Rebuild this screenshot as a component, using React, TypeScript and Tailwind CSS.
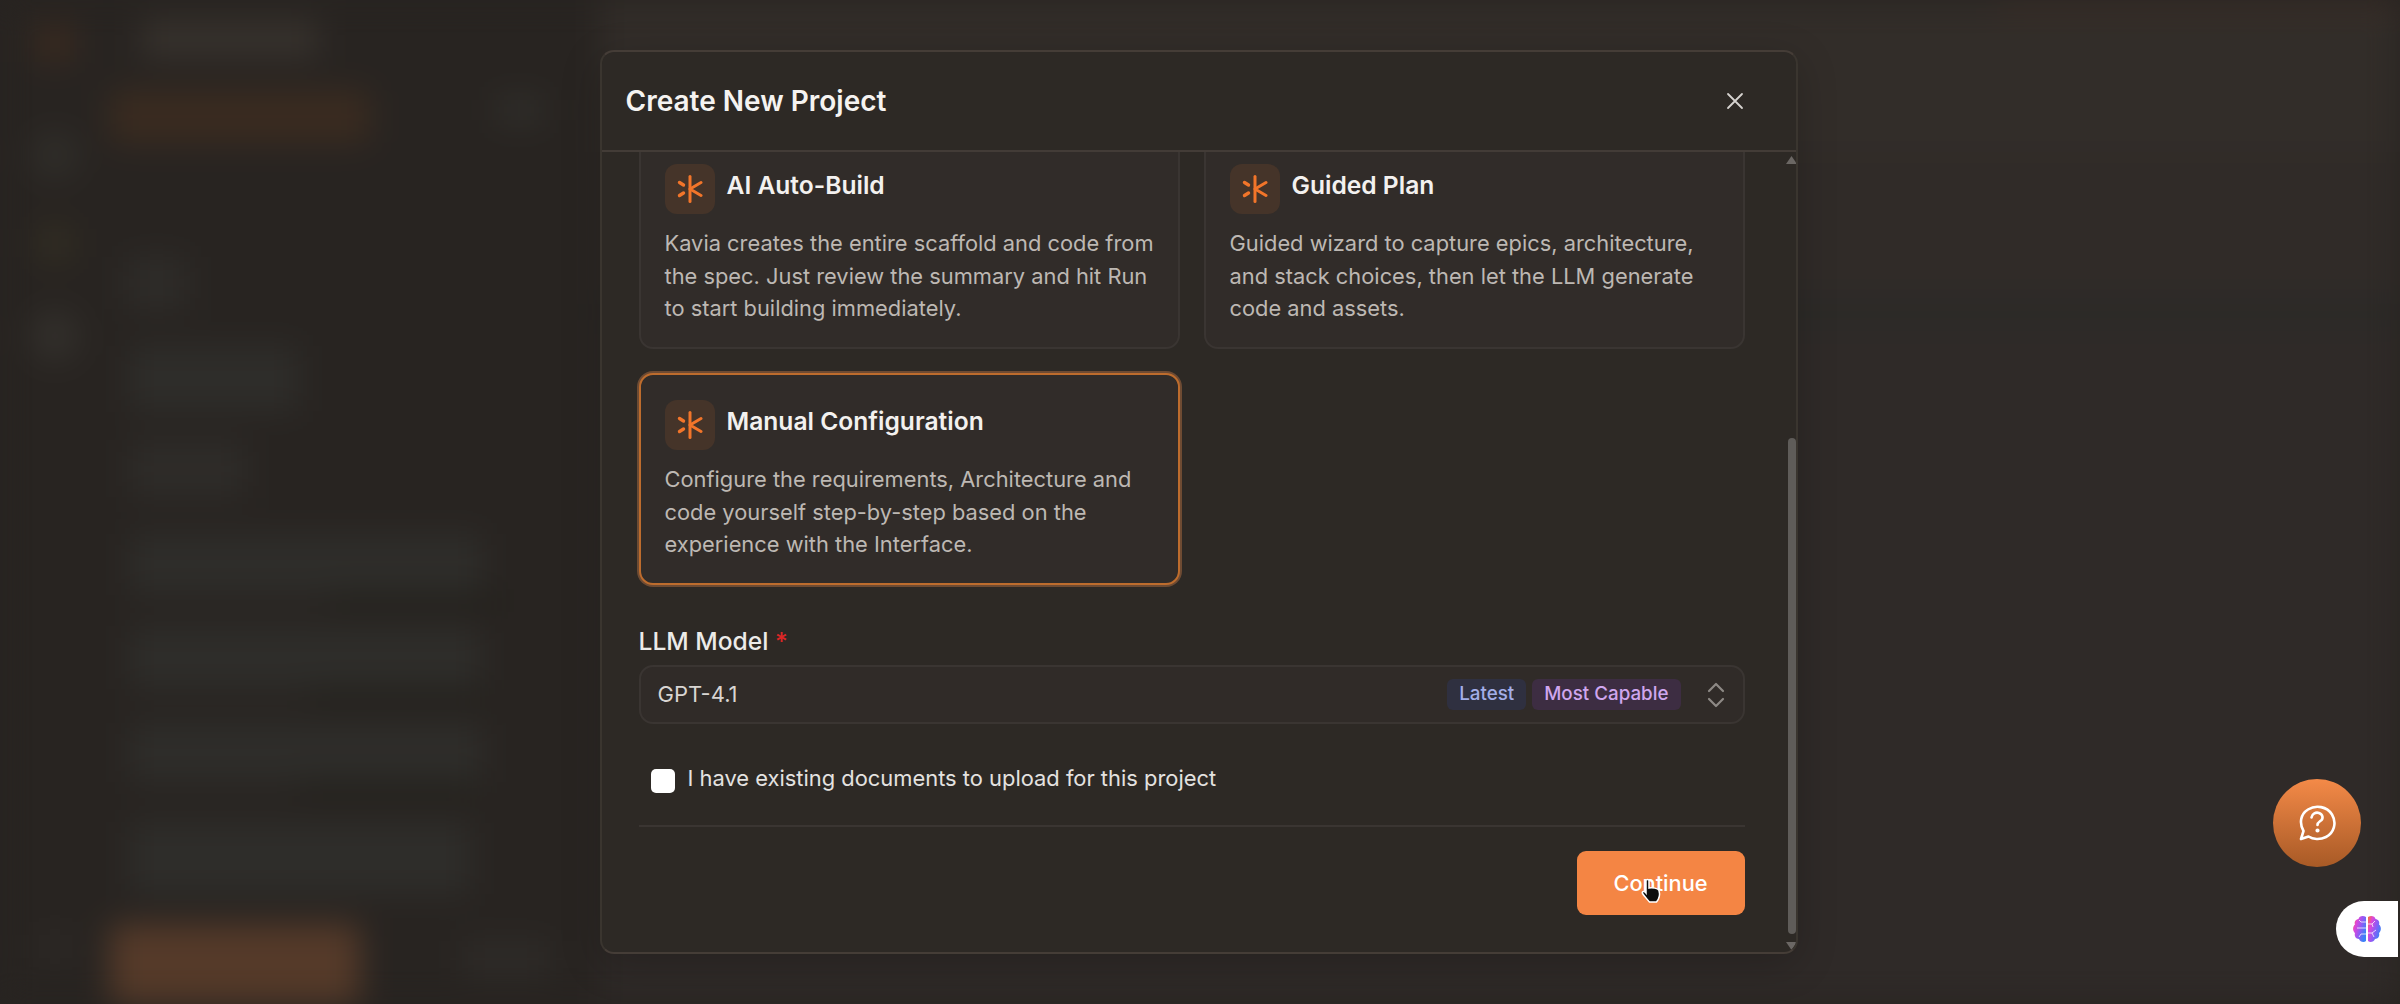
import React from "react";

const font = { fontFamily: "Inter, 'Liberation Sans', sans-serif" };

function KaviaMark() {
  return (
    <svg width="26" height="28" viewBox="0 0 26 28" fill="none" stroke="#f2752a" strokeLinecap="round">
      <path d="M13 1.500V26.500" strokeWidth="3" />
      <path d="M13 14L24 7.500M13 14L24 20.500" strokeWidth="3" />
      <path d="M2.500 7.500L6.500 10M2.500 20.500L6.500 18" strokeWidth="3.400" />
    </svg>
  );
}

function ModeCard({ title, text, selected }: { title: string; text: string[]; selected?: boolean }) {
  return (
    <div
      className={
        selected
          ? "h-[212px] rounded-[14px] border-2 border-[#bd6c2d] bg-[#312c29] px-[24px] pt-[25px] shadow-[0_0_0_2px_#6e4b33]"
          : "h-[212px] rounded-[14px] border-2 border-[#3a3532] bg-[#312c29] px-[24px] pt-[25px]"
      }
    >
      <div className="flex items-start gap-[12px]">
        <div className="flex h-[50px] w-[50px] items-center justify-center rounded-[12px] bg-[#453429]">
          <KaviaMark />
        </div>
        <div className="pt-[5px] text-[24.6px] font-semibold leading-[32px] text-[#f3f1ef]">{title}</div>
      </div>
      <div className="mt-[13px] text-[21.85px] leading-[32.5px] text-[#bdb8b3]">
        {text.map((l) => (
          <div key={l} className="whitespace-nowrap">{l}</div>
        ))}
      </div>
    </div>
  );
}

function BackdropPage() {
  return (
    <div className="flex h-[1004px] w-[2400px] bg-[#282421] blur-[16px]">
      <div className="flex w-[110px] shrink-0 flex-col items-center pt-[24px]">
        <div className="h-[38px] w-[38px] bg-[#3a2a20]" />
        <div className="mt-[70px] h-[46px] w-[46px] rounded-full bg-[#302e2a]" />
        <div className="mt-[50px] h-[30px] w-[30px] bg-[#353022]" />
        <div className="mt-[53px] h-[50px] w-[46px] rounded-full bg-[#33302c]" />
        <div className="mt-auto mb-[44px] h-[27px] w-[34px] bg-[#2d2926]" />
      </div>
      <div className="flex w-[490px] shrink-0 flex-col">
        <div className="ml-[32px] mt-[20px] h-[37px] w-[176px] bg-[#37322d]" />
        <div className="mt-[33px] flex items-start">
          <div className="h-[53px] w-[260px] rounded-lg bg-[#3a2b20]" />
          <div className="ml-[126px] mt-[7px] h-[26px] w-[46px] bg-[#302f2b]" />
        </div>
        <div className="ml-[16px] mt-[114px] h-[53px] w-[61px] bg-[#2e2c29]" />
        <div className="ml-[20px] mt-[37px] h-[66px] w-[168px] bg-[#2e2d2a]" />
        <div className="ml-[20px] mt-[30px] h-[57px] w-[115px] bg-[#2e2c29]" />
        <div className="ml-[20px] mt-[37px] h-[60px] w-[352px] bg-[#2e2d2a]" />
        <div className="ml-[220px] h-[13px] w-[172px] bg-[#211f1a]" />
        <div className="ml-[20px] mt-[20px] h-[63px] w-[350px] bg-[#2e2d2a]" />
        <div className="ml-[200px] h-[13px] w-[172px] bg-[#211f1a]" />
        <div className="ml-[20px] mt-[21px] h-[60px] w-[352px] bg-[#2e2d2a]" />
        <div className="ml-[190px] h-[13px] w-[172px] bg-[#211f1a]" />
        <div className="ml-[20px] mt-[27px] h-[73px] w-[340px] bg-[#2e2d2a]" />
        <div className="mt-[30px] flex items-start">
          <div className="h-[80px] w-[250px] rounded-lg bg-[#553a29]" />
          <div className="ml-[102px] mt-[17px] h-[36px] w-[88px] bg-[#2e2b28]" />
        </div>
      </div>
      <div className="flex grow flex-col">
        <div className="flex h-[16px]">
          <div className="grow bg-[#322d29]" />
          <div className="w-[400px] bg-[#3a2e28]" />
        </div>
        <div className="h-[136px] bg-[#322d29]" />
        <div className="h-[148px] bg-[#302b28]" />
        <div className="h-[24px] bg-[#2a2927]" />
        <div className="grow bg-[#2f2a28]" />
      </div>
    </div>
  );
}

function Brain() {
  return (
    <svg width="30" height="28" viewBox="0 0 30 28">
      <defs>
        <linearGradient id="brainGrad" x1="0" y1="0" x2="1" y2="0.600">
          <stop offset="0" stopColor="#f9732a" />
          <stop offset="0.3" stopColor="#e045d8" />
          <stop offset="0.65" stopColor="#8b5cf6" />
          <stop offset="1" stopColor="#3b82f6" />
        </linearGradient>
      </defs>
      <path
        d="M14 2C11 0 7 1 6.500 4 3.500 4.500 2 7 3 9.500 0.500 11.500 0.500 16 3 18 2 21 4 24 7 24 8 27 12 28 14 26Z"
        fill="url(#brainGrad)"
      />
      <path
        d="M16 2C19 0 23 1 23.500 4 26.500 4.500 28 7 27 9.500 29.500 11.500 29.500 16 27 18 28 21 26 24 23 24 22 27 18 28 16 26Z"
        fill="url(#brainGrad)"
      />
      <path
        d="M14 13H5M14 7H9L7 5M14 19H9L7 22M16 9H20L23 6M20 9L21 12M16 18H20L24 15M20 18L22 22"
        fill="none"
        stroke="#ffffff"
        strokeOpacity="0.75"
        strokeWidth="1"
      />
    </svg>
  );
}

export default function App() {
  return (
    <div className="relative h-[1004px] w-[2400px] overflow-hidden bg-[#282421]" style={font}>
      <BackdropPage />

      <div className="absolute inset-0 flex items-start justify-center pr-[3px] pt-[50px]">
        <div className="flex h-[904px] w-[1198px] flex-col overflow-hidden rounded-[14px] border-2 border-x-[#3a352f] border-y-[#453d37] bg-[#2d2925] shadow-[0_10px_40px_rgba(0,0,0,0.2)]">
          <div className="flex h-[100px] shrink-0 items-center justify-between border-b-2 border-[#433c37] pl-[24px] pr-[51px]">
            <h1 className="text-[28px] font-semibold text-[#f5f3f1]">Create New Project</h1>
            <svg width="20" height="20" viewBox="0 0 20 20" fill="none" stroke="#d6d3d0" strokeWidth="1.800" strokeLinecap="round">
              <path d="M3 3L17 17M17 3L3 17" />
            </svg>
          </div>

          <div className="flex min-h-0 grow">
            <div className="w-[1184px] shrink-0 overflow-hidden pl-[37px] pr-[41px]">
              <div className="-mt-[15px]">
                <div className="grid grid-cols-2 gap-[24px]">
                  <ModeCard
                    title="AI Auto-Build"
                    text={[
                      "Kavia creates the entire scaffold and code from",
                      "the spec. Just review the summary and hit Run",
                      "to start building immediately.",
                    ]}
                  />
                  <ModeCard
                    title="Guided Plan"
                    text={[
                      "Guided wizard to capture epics, architecture,",
                      "and stack choices, then let the LLM generate",
                      "code and assets.",
                    ]}
                  />
                  <ModeCard
                    selected
                    title="Manual Configuration"
                    text={[
                      "Configure the requirements, Architecture and",
                      "code yourself step-by-step based on the",
                      "experience with the Interface.",
                    ]}
                  />
                </div>

                <div className="mt-[41px] text-[24.6px] font-medium leading-[30px] text-[#ecebe9]">
                  LLM Model <span className="text-[#dc2626]">*</span>
                </div>
                <div className="mt-[9px] flex h-[59px] items-center rounded-[14px] border-2 border-[#3a3532] bg-[#302b28] pl-[17px] pr-[18px]">
                  <span className="text-[22px] text-[#d8d5d2]">GPT-4.1</span>
                  <span className="ml-auto flex h-[31px] items-center rounded-[6px] bg-[#2f3040] px-[12px] text-[18.800px] font-medium text-[#a3aee8]">Latest</span>
                  <span className="ml-[6px] flex h-[31px] items-center rounded-[6px] bg-[#3d2d42] px-[12px] text-[18.800px] font-medium text-[#cfa6ee]">Most Capable</span>
                  <svg className="ml-[26px]" width="18" height="26" viewBox="0 0 18 26" fill="none" stroke="#8d8985" strokeWidth="2.200" strokeLinecap="round" strokeLinejoin="round">
                    <path d="M2 9L9 2L16 9M2 17L9 24L16 17" />
                  </svg>
                </div>

                <div className="mt-[41px] flex items-center pl-[12px]">
                  <div className="h-[24px] w-[24px] rounded-[5px] bg-white" />
                  <span className="ml-[13px] -translate-y-[3px] text-[21.900px] text-[#e4e2e0]">I have existing documents to upload for this project</span>
                </div>

                <div className="mt-[27px] border-t-2 border-[#3a3532]" />

                <div className="mt-[24px] flex justify-end">
                  <div className="relative flex h-[64px] w-[168px] items-center justify-center rounded-[9px] bg-[#f48544] text-[21.800px] font-medium text-white">
                    Continue
                    <svg className="absolute left-[63px] top-[27px]" width="22" height="26" viewBox="0 0 22 26">
                      <path
                        d="M6 2.500C6 1 9 1 9 2.500V10C12 9.500 18 10 19 12.500 20 16 19 21 16.500 24H9.500C7 21 4 18 2.500 15.500 1.500 13.500 4 12.500 6 15Z"
                        fill="#0d0d0d"
                        stroke="#ffffff"
                        strokeWidth="1.500"
                      />
                    </svg>
                  </div>
                </div>
              </div>
            </div>

            <div className="flex w-[12px] shrink-0 flex-col items-center pt-[4px]">
              <svg width="11" height="8" viewBox="0 0 11 8"><path d="M5.500 0L11 8H0Z" fill="#6b6764" /></svg>
              <div className="mt-[274px] h-[496px] w-[8px] rounded-full bg-[#5f5c59]" />
              <svg className="mt-[8px]" width="11" height="8" viewBox="0 0 11 8"><path d="M5.500 8L11 0H0Z" fill="#6b6764" /></svg>
            </div>
          </div>
        </div>
      </div>

      <div className="absolute left-[2273px] top-[779px] flex h-[88px] w-[88px] items-center justify-center rounded-full bg-gradient-to-b from-[#f48a48] to-[#a85a26]">
        <svg width="40" height="40" viewBox="0 0 40 40" fill="none" stroke="#ffffff" strokeWidth="2.600" strokeLinecap="round" strokeLinejoin="round">
          <path d="M4 36L6.500 28C2 20 3.500 11 11 6.500C19 1.500 30 3.500 35 11.500C40 20 37 30 29 34C23 37 16 36.500 11.500 33.500Z" />
          <path d="M14.500 14.500C15 10.500 19 9 22 10C26 11.500 26.500 15.500 24 17.500C22 19 20.500 19.500 20.500 22" />
          <circle cx="20.500" cy="27.500" r="0.800" fill="#ffffff" />
        </svg>
      </div>

      <div className="absolute left-[2336px] top-[901px] flex h-[56px] w-[62px] items-center rounded-l-[28px] bg-white pl-[16px]">
        <Brain />
      </div>
    </div>
  );
}
